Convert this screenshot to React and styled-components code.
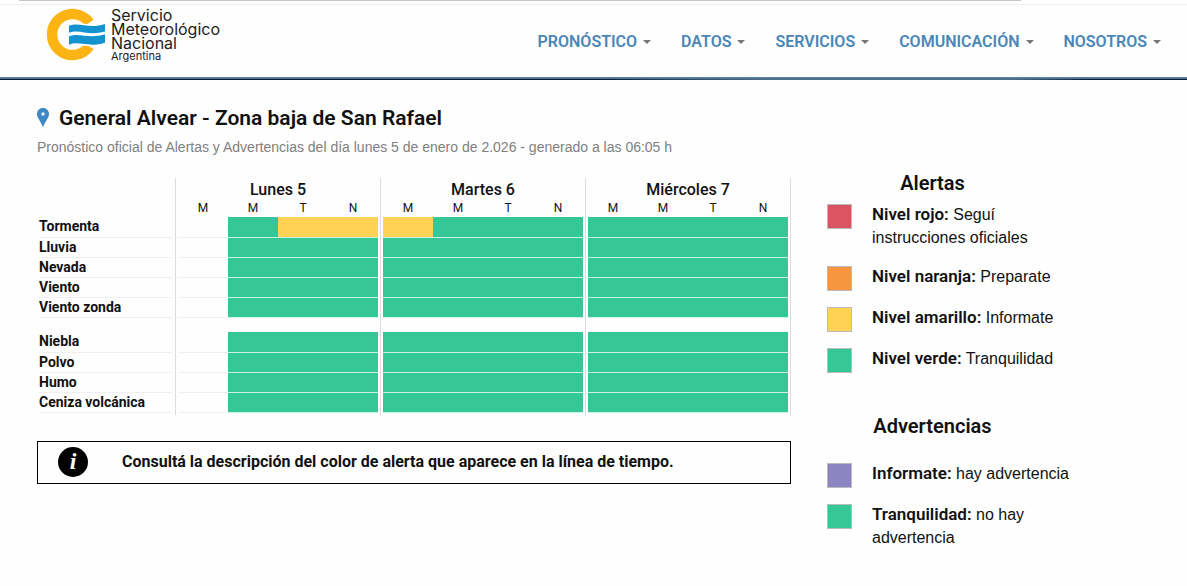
import styled, { createGlobalStyle } from "styled-components";

const GlobalStyle = createGlobalStyle`
  * {
    box-sizing: border-box;
  }

  body {
    margin: 0;
    background-color: #fefefe;
    color: #111;
    font-family: Roboto, "Liberation Sans", sans-serif;
  }
`

const TopEdge = styled.div`
  height: 5px;
  border-bottom: 1px solid #f0f0f0;

  &::before {
    content: "";
    display: block;
    height: 1px;
    margin: 0 14% 0 19px;
    background-color: #c6c6c6;
  }
`

const Header = styled.header`
  display: flex;
  justify-content: space-between;
  height: 75px;
  padding: 0 26px 0 46px;
  border-bottom: 2px solid #4f6f8f;
  box-shadow: inset 0 -1px 0 #5b84ad;
`

const HeaderShade = styled.div`
  height: 1px;
  margin-top: -1px;
  background: linear-gradient(to right, #0b1c38 0%, #0b1c38 50%, #4f6f8f 65%, #4f6f8f 85%, #0b1c38 92%);
`

const Brand = styled.a`
  display: flex;
  gap: 5px;
  padding-top: 3px;
  color: #222;
  text-decoration: none;
`

const BrandText = styled.span`
  display: flex;
  flex-direction: column;
  font-family: Inter, "Liberation Sans", sans-serif;
  font-size: 16px;
  line-height: 14px;
`

const BrandCountry = styled.small`
  font-size: 11px;
  line-height: 13px;
`

const Nav = styled.nav`
  display: flex;
  gap: 30px;
  padding-top: 25px;
`

const NavButton = styled.button`
  display: flex;
  align-items: center;
  gap: 6px;
  height: 22px;
  padding: 0;
  border: none;
  background: none;
  color: #4a86b8;
  font-family: inherit;
  font-size: 16px;
  font-weight: 600;
  cursor: pointer;

  &::after {
    content: "";
    margin-top: 2px;
    border-top: 4px solid #777;
    border-left: 4px solid transparent;
    border-right: 4px solid transparent;
  }
`

const Main = styled.main`
  display: grid;
  grid-template-columns: minmax(0, 1fr) 250px;
  column-gap: 36px;
  padding: 25px 110px 24px 37px;
`

const Heading = styled.div`
  grid-column: 1 / -1;
`

const Title = styled.h1`
  display: flex;
  align-items: center;
  gap: 10px;
  margin: 0;
  font-size: 21px;
  font-weight: 600;
  line-height: 26px;
`

const Subtitle = styled.p`
  margin: 7px 0 0;
  color: #808080;
  font-family: "Liberation Sans", sans-serif;
  font-size: 14px;
  line-height: 18px;
`

const Forecast = styled.section`
  padding-top: 22px;
`

const Table = styled.table`
  width: 100%;
  table-layout: fixed;
  border-spacing: 0;

  th,
  td {
    padding: 0;
  }
`

const DayHead = styled.th`
  height: 23px;
  border-left: 1px solid #dcdcdc;
  border-right: ${(props) => (props.$end ? "1px solid #dcdcdc" : "none")};
  font-size: 16px;
  font-weight: 500;
  line-height: 23px;
`

const Slot = styled.td`
  border-left: ${(props) => (props.$first ? "1px solid #dcdcdc" : "none")};
  border-right: ${(props) => (props.$end ? "1px solid #dcdcdc" : "none")};

  && {
    padding-left: ${(props) => (props.$first ? "2px" : "0")};
    padding-right: ${(props) => (props.$last ? "2px" : "0")};
  }
`

const Hour = styled.div`
  height: 16px;
  font-size: 12px;
  font-weight: 400;
  line-height: 15px;
  text-align: center;
`

const Level = styled.div`
  height: ${(props) => (props.$tall ? 21 : 20)}px;
  border-bottom: 1px solid ${(props) => (props.$color ? "#c9f3e3" : "#f0f0f0")};
  background-color: ${(props) => props.$color || "transparent"};
  background-clip: padding-box;
`

const RowLabel = styled.th`
  text-align: left;
`

const LabelText = styled.div`
  height: ${(props) => (props.$tall ? 21 : 20)}px;
  margin: 0 3px 0 2px;
  border-bottom: 1px solid #f0f0f0;
  font-size: 14px;
  font-weight: 700;
  line-height: 19px;
`

const Spacer = styled.div`
  height: ${(props) => props.$size}px;
`

const Note = styled.div`
  display: flex;
  align-items: center;
  gap: 34px;
  height: 43px;
  margin-top: 26px;
  padding: 0 20px 2px;
  border: 1px solid #000;
  font-size: 16px;
  font-weight: 700;
`

const InfoBadge = styled.span`
  width: 30px;
  height: 30px;
  border-radius: 50%;
  background-color: #000;
  color: #fff;
  font-family: "Liberation Serif", serif;
  font-size: 24px;
  font-style: italic;
  line-height: 29px;
  text-align: center;
`

const Legend = styled.aside`
  display: grid;
  align-content: start;
  row-gap: 42px;
  padding-top: 15px;
`

const LegendTitle = styled.h2`
  margin: 0;
  padding-right: 39px;
  font-size: 20px;
  font-weight: 600;
  line-height: 24px;
  text-align: center;
`

const LegendList = styled.ul`
  display: grid;
  row-gap: 16px;
  margin: ${(props) => props.$space}px 0 0;
  padding: 0;
  list-style: none;
`

const LegendItem = styled.li`
  display: flex;
  gap: 20px;
  font-family: "Liberation Sans", sans-serif;
  font-size: 16px;
  line-height: 23px;

  strong {
    font-family: Roboto, sans-serif;
    font-size: 17px;
    font-weight: 600;
    line-height: 20px;
  }
`

const Swatch = styled.span`
  flex: none;
  width: 25px;
  height: 25px;
  margin-top: 1px;
  margin-bottom: -1px;
  border: 1px solid #bbb;
  background-color: ${(props) => props.$color};
`

const colors = {
  green: "#35c796",
  yellow: "#ffd255",
  orange: "#f7963e",
  red: "#db5461",
  purple: "#8d84c4",
}

const menu = ["PRONÓSTICO", "DATOS", "SERVICIOS", "COMUNICACIÓN", "NOSOTROS"];
const days = ["Lunes 5", "Martes 6", "Miércoles 7"];
const hours = ["M", "M", "T", "N"];
const widths = [53, 50, 50, 52, 53, 50, 50, 52, 53, 50, 50, 53];

const calm = "-ggggggggggg";
const groups = [
  [
    { name: "Tormenta", levels: "-gyyyggggggg" },
    { name: "Lluvia", levels: calm },
    { name: "Nevada", levels: calm },
    { name: "Viento", levels: calm },
    { name: "Viento zonda", levels: calm },
  ],
  [
    { name: "Niebla", levels: calm },
    { name: "Polvo", levels: calm },
    { name: "Humo", levels: calm },
    { name: "Ceniza volcánica", levels: calm },
  ],
];

const levelColors = { g: colors.green, y: colors.yellow };

const alerts = [
  { color: colors.red, name: "Nivel rojo:", text: "Seguí instrucciones oficiales" },
  { color: colors.orange, name: "Nivel naranja:", text: "Preparate" },
  { color: colors.yellow, name: "Nivel amarillo:", text: "Informate" },
  { color: colors.green, name: "Nivel verde:", text: "Tranquilidad" },
];

const warnings = [
  { color: colors.purple, name: "Informate:", text: "hay advertencia" },
  { color: colors.green, name: "Tranquilidad:", text: "no hay advertencia" },
];

const Logo = () => (
  <svg width="60" height="54" viewBox="0 0 60 54" aria-hidden="true">
    <path
      d="M43.3 14.7 A20.5 20.5 0 1 0 43.3 38.3"
      fill="none"
      stroke="#fcb415"
      strokeWidth="10.5"
    />
    <path
      d="M23 17.7 C34 13.5 42 21.5 59 16 V23.5 C42 28.5 34 20.5 23 24.7 Z M23 28.3 C34 24 42 31.5 59 26.3 V34.7 C42 40 34 32.5 23 36.7 Z"
      fill="#1592d0"
      stroke="#fefefe"
      strokeWidth="3"
      paintOrder="stroke"
    />
  </svg>
)

const Pin = () => (
  <svg width="12" height="20" viewBox="0 0 12 20" aria-hidden="true">
    <path
      d="M6 0 C2.6 0 0 2.6 0 6 C0 10 3.8 13 6 19.5 C8.2 13 12 10 12 6 C12 2.6 9.4 0 6 0 Z"
      fill="#3f86c4"
    />
    <circle cx="6" cy="6" r="1.8" fill="#e4f0fa" />
  </svg>
)

const Slots = ({ render }) =>
  widths.map((_, i) => (
    <Slot key={i} $first={i % 4 === 0} $last={i % 4 === 3} $end={i === 11}>
      {render(i)}
    </Slot>
  ))

const SpacerRow = ({ size }) => (
  <tr>
    <td></td>
    <Slots render={() => <Spacer $size={size} />} />
  </tr>
)

const Timeline = () => (
  <Table>
    <colgroup>
      <col width="138" />
      {widths.map((width, i) => (
        <col key={i} width={width} />
      ))}
    </colgroup>
    <thead>
      <tr>
        <td></td>
        {days.map((day, i) => (
          <DayHead key={day} colSpan={4} $end={i === 2}>{day}</DayHead>
        ))}
      </tr>
      <tr>
        <td></td>
        <Slots render={(i) => <Hour>{hours[i % 4]}</Hour>} />
      </tr>
    </thead>
    {groups.map((rows, g) => (
      <tbody key={g}>
        {rows.map((row, r) => (
          <tr key={row.name}>
            <RowLabel scope="row">
              <LabelText $tall={r === 0}>{row.name}</LabelText>
            </RowLabel>
            <Slots
              render={(i) => <Level $tall={r === 0} $color={levelColors[row.levels[i]]} />}
            />
          </tr>
        ))}
        <SpacerRow size={g === 0 ? 14 : 2} />
      </tbody>
    ))}
  </Table>
)

const LegendGroup = ({ title, items, space }) => (
  <section>
    <LegendTitle>{title}</LegendTitle>
    <LegendList $space={space}>
      {items.map((item) => (
        <LegendItem key={item.name}>
          <Swatch $color={item.color} />
          <span>
            <strong>{item.name}</strong> {item.text}
          </span>
        </LegendItem>
      ))}
    </LegendList>
  </section>
)

const App = () => {
  return (
    <>
      <GlobalStyle />
      <TopEdge />
      <Header>
        <Brand href="#">
          <Logo />
          <BrandText>
            <span>Servicio</span>
            <span>Meteorológico</span>
            <span>Nacional</span>
            <BrandCountry>Argentina</BrandCountry>
          </BrandText>
        </Brand>
        <Nav>
          {menu.map((item) => (
            <NavButton key={item} type="button">{item}</NavButton>
          ))}
        </Nav>
      </Header>
      <HeaderShade />

      <Main>
        <Heading>
          <Title>
            <Pin />
            General Alvear - Zona baja de San Rafael
          </Title>
          <Subtitle>
            Pronóstico oficial de Alertas y Advertencias del día lunes 5 de enero de 2.026 - generado a las 06:05 h
          </Subtitle>
        </Heading>

        <Forecast>
          <Timeline />
          <Note>
            <InfoBadge>i</InfoBadge>
            Consultá la descripción del color de alerta que aparece en la línea de tiempo.
          </Note>
        </Forecast>

        <Legend>
          <LegendGroup title="Alertas" items={alerts} space={8} />
          <LegendGroup title="Advertencias" items={warnings} space={24} />
        </Legend>
      </Main>
    </>
  )
}

export default App
